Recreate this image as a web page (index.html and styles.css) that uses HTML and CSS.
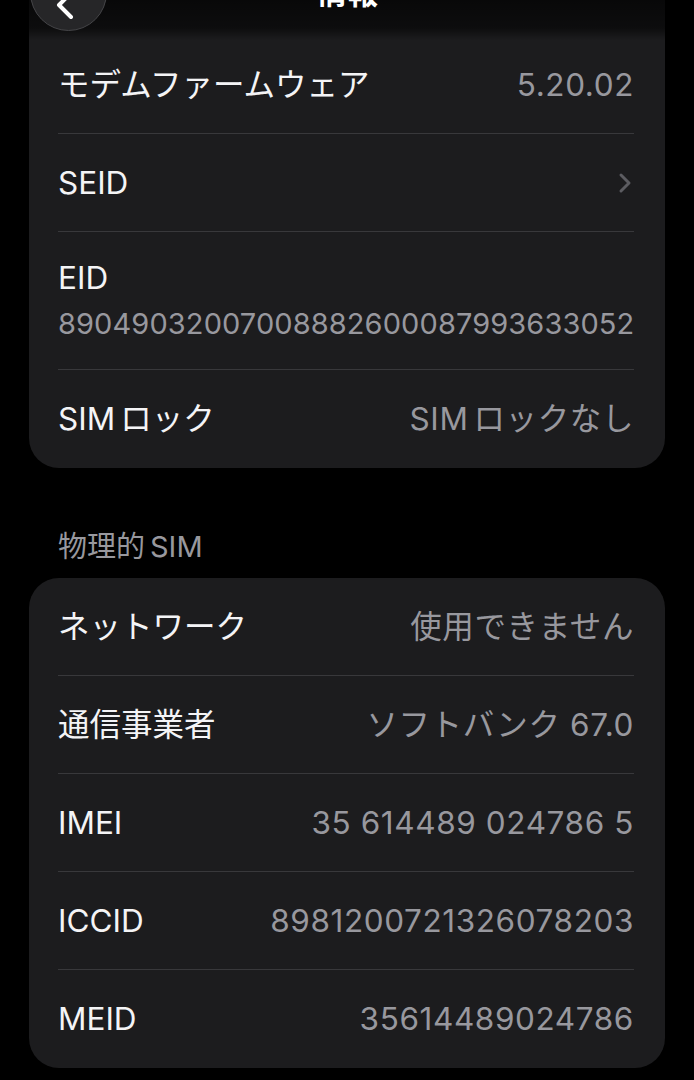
FILE: index.html
```html
<!DOCTYPE html>
<html lang="ja">
<head>
<meta charset="utf-8">
<link rel="stylesheet" href="styles.css">
</head>
<body>
<div class="page">
  <div class="navbar">
    <div class="back">
      <svg class="back-icon" width="40" height="40" viewBox="0 0 40 40"><path d="M24 2 L12 14 L24 26" fill="none" stroke="#fff" stroke-width="4" stroke-linecap="round" stroke-linejoin="round"/></svg>
    </div>
    <div class="nav-title">情報</div>
  </div>

  <div class="card card-first">
    <div class="row"><span class="label">モデムファームウェア</span><span class="value">5.20.02</span></div>
    <div class="row"><span class="label">SEID</span>
      <svg class="chev" width="14" height="22" viewBox="0 0 14 22"><path d="M3 3 L11 11 L3 19" fill="none" stroke="#5c5c61" stroke-width="3" stroke-linecap="round" stroke-linejoin="round"/></svg>
    </div>
    <div class="row row-stack"><span class="label">EID</span><span class="value value-small">89049032007008882600087993633052</span></div>
    <div class="row"><span class="label"><span class="latin">SIM</span>ロック</span><span class="value"><span class="latin">SIM</span>ロックなし</span></div>
  </div>

  <div class="section-title"><span class="latin">物理的</span>SIM</div>

  <div class="card">
    <div class="row"><span class="label">ネットワーク</span><span class="value">使用できません</span></div>
    <div class="row"><span class="label">通信事業者</span><span class="value">ソフトバンク 67.0</span></div>
    <div class="row"><span class="label">IMEI</span><span class="value">35 614489 024786 5</span></div>
    <div class="row"><span class="label">ICCID</span><span class="value">8981200721326078203</span></div>
    <div class="row"><span class="label">MEID</span><span class="value">35614489024786</span></div>
  </div>
</div>
</body>
</html>
```

FILE: styles.css
```css
* { box-sizing: border-box; }
html, body { margin: 0; padding: 0; background: #000; }
body {
  font-family: "Inter", "Noto Sans CJK JP", sans-serif;
  color: #fff;
  width: 694px;
  height: 1080px;
  overflow: hidden;
}
.page {
  position: relative;
  padding: 0 29px 0 29px;
}
.navbar {
  position: absolute;
  left: 0;
  top: 0;
  width: 694px;
  height: 44px;
  background: linear-gradient(to bottom, rgba(0,0,0,0.72) 0, rgba(0,0,0,0.55) 28px, rgba(0,0,0,0) 40px);
  z-index: 2;
}
.back {
  position: absolute;
  left: 30px;
  top: -46px;
  width: 77px;
  height: 77px;
  border-radius: 50%;
  background: #262628;
  border: 1.5px solid #454548;
}
.back-icon {
  position: absolute;
  left: 16px;
  top: 36px;
}
.nav-title {
  position: absolute;
  left: 0;
  right: 0;
  top: -24px;
  text-align: center;
  font-size: 31px;
  font-weight: 700;
  line-height: 34px;
  color: #fff;
}
.card {
  background: #1c1c1e;
  border-radius: 30px;
  padding: 0 31px 0 29px;
}
.card-first {
  border-radius: 0 0 30px 30px;
  padding-top: 36px;
}
.row {
  height: 98px;
  display: flex;
  align-items: center;
  justify-content: space-between;
  border-bottom: 1px solid #38383b;
  font-size: 31.5px;
}
.row:last-child { border-bottom: none; }
.row-stack {
  height: 138px;
  flex-direction: column;
  align-items: flex-start;
  justify-content: center;
  gap: 6px;
}
.label {
  color: #f4f4f6;
  line-height: 40px;
}
.value {
  color: #98989e;
  line-height: 40px;
  letter-spacing: 0.6px;
}
.value-small {
  font-size: 29px;
  letter-spacing: 0.1px;
}
.latin { margin-right: 5px; }
.chev { margin-right: 2px; }
.section-title {
  color: #98989e;
  font-size: 29px;
  line-height: 34px;
  padding-left: 29px;
  margin: 62px 0 14px 0;
}
```
